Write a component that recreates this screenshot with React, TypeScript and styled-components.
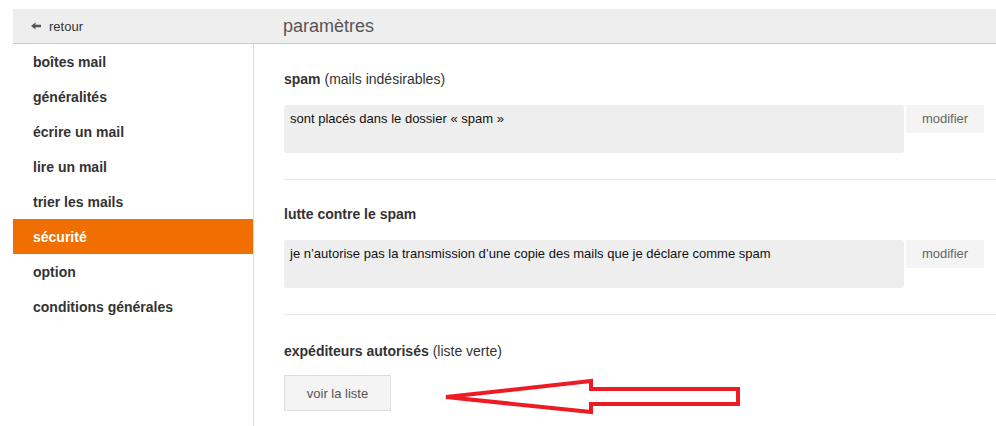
import styled, { createGlobalStyle } from "styled-components";

const GlobalStyle = createGlobalStyle`
  html, body {
    margin: 0;
    padding: 0;
    background: #fff;
    font-family: "Liberation Sans", Arial, sans-serif;
    color: #333;
  }
`;

const Page = styled.div`
  position: relative;
  padding: 9px 0 0 13px;
  height: 426px;
  box-sizing: border-box;
  overflow: hidden;
`;

const Header = styled.div`
  display: grid;
  grid-template-columns: 240px 1fr;
  height: 34px;
  background: #eeeeee;
  border-bottom: 1px solid #cccccc;
`;

const BackLink = styled.a`
  display: flex;
  align-items: center;
  gap: 8px;
  padding-left: 18px;
  font-size: 13px;
  color: #333;
  text-decoration: none;
  cursor: pointer;
`;

const PageTitle = styled.h1`
  margin: 0;
  padding-left: 30px;
  display: flex;
  align-items: center;
  font-size: 18px;
  font-weight: normal;
  color: #555;
`;

const Body = styled.div`
  display: grid;
  grid-template-columns: 241px 1fr;
  min-height: 382px;
`;

const Sidebar = styled.nav`
  border-right: 1px solid #dddddd;
`;

const MenuItem = styled.div<{ $active?: boolean }>`
  height: 35px;
  display: flex;
  align-items: center;
  padding-left: 20px;
  font-size: 14px;
  font-weight: bold;
  color: ${(p) => (p.$active ? "#fff" : "#333")};
  background: ${(p) => (p.$active ? "#f16e00" : "transparent")};
`;

const Content = styled.main`
  padding-left: 30px;
`;

const Section = styled.section<{ $top: number; $last?: boolean }>`
  padding: ${(p) => p.$top}px 12px 26px 0;
  border-bottom: ${(p) => (p.$last ? "none" : "1px solid #e6e6e6")};
`;

const SectionTitle = styled.h2`
  margin: 0 0 16px;
  font-size: 14px;
  line-height: 20px;
  font-weight: bold;
  color: #333;

  span {
    font-weight: normal;
  }
`;

const Row = styled.div`
  display: flex;
  align-items: flex-start;
  gap: 2px;
`;

const ValueBox = styled.div`
  flex: 1;
  height: 48px;
  box-sizing: border-box;
  padding: 6px;
  background: #eeeeee;
  border-radius: 3px;
  font-size: 13px;
  line-height: 16px;
  color: #111;
`;

const ModifyButton = styled.button`
  width: 78px;
  height: 28px;
  padding: 0 0 2px;
  border: none;
  background: #f4f4f4;
  font-family: inherit;
  font-size: 13px;
  color: #666;
  cursor: pointer;
`;

const ListButton = styled.button`
  width: 107px;
  height: 36px;
  margin-top: -2px;
  border: 1px solid #dddddd;
  background: #f4f4f4;
  font-family: inherit;
  font-size: 13px;
  color: #555;
  cursor: pointer;
`;

const Annotation = styled.svg`
  position: absolute;
  left: 440px;
  top: 375px;
  pointer-events: none;
`;

const menu = [
  "boîtes mail",
  "généralités",
  "écrire un mail",
  "lire un mail",
  "trier les mails",
  "sécurité",
  "option",
  "conditions générales",
];

function BackArrow() {
  return (
    <svg width="10" height="8" viewBox="0 0 10 8">
      <path d="M0 4 L4.5 0.5 L4.5 2.8 L10 2.8 L10 5.2 L4.5 5.2 L4.5 7.5 Z" fill="#555" />
    </svg>
  );
}

export default function App() {
  return (
    <>
      <GlobalStyle />
      <Page>
        <Header>
          <BackLink>
            <BackArrow />
            retour
          </BackLink>
          <PageTitle>paramètres</PageTitle>
        </Header>
        <Body>
          <Sidebar>
            {menu.map((item) => (
              <MenuItem key={item} $active={item === "sécurité"}>
                {item}
              </MenuItem>
            ))}
          </Sidebar>
          <Content>
            <Section $top={25}>
              <SectionTitle>
                spam <span>(mails indésirables)</span>
              </SectionTitle>
              <Row>
                <ValueBox>sont placés dans le dossier « spam »</ValueBox>
                <ModifyButton>modifier</ModifyButton>
              </Row>
            </Section>
            <Section $top={24}>
              <SectionTitle>lutte contre le spam</SectionTitle>
              <Row>
                <ValueBox>
                  je n’autorise pas la transmission d’une copie des mails que je déclare comme spam
                </ValueBox>
                <ModifyButton>modifier</ModifyButton>
              </Row>
            </Section>
            <Section $top={26} $last>
              <SectionTitle>
                expéditeurs autorisés <span>(liste verte)</span>
              </SectionTitle>
              <ListButton>voir la liste</ListButton>
            </Section>
          </Content>
        </Body>
        <Annotation width="306" height="46" viewBox="0 0 306 46">
          <polygon
            points="6,22 151,6 151,14 298,14 298,29 151,29 151,37"
            fill="none"
            stroke="#ed1c24"
            strokeWidth="4"
            strokeLinejoin="miter"
          />
        </Annotation>
      </Page>
    </>
  );
}
